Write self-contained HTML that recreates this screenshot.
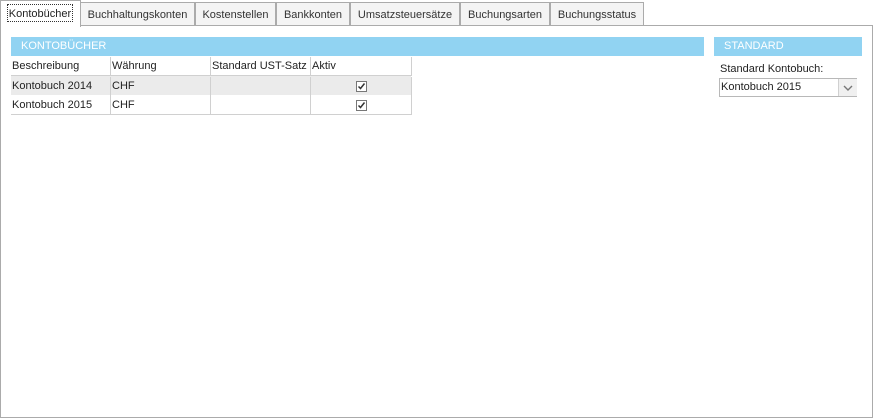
<!DOCTYPE html>
<html><head><style>
body{margin:0;width:873px;height:418px;background:#fff;font-family:"Liberation Sans",sans-serif;font-size:11px;color:#222;position:relative;overflow:hidden}
.a{position:absolute}
.tab{position:absolute;top:2px;height:23px;border:1px solid #ababab;border-bottom:none;background:#f4f4f4;line-height:24px;text-align:center;box-sizing:border-box;color:#333}
.hd{position:absolute;background:#91d3f2;color:#fff;height:19px;line-height:19px;padding-left:10px;box-sizing:border-box}
.c{position:absolute;height:19px;line-height:19px;padding-left:1px;box-sizing:border-box;border-right:1px solid #d0d0d0}
.chk{position:absolute;width:11px;height:11px;border:1px solid #777;box-sizing:border-box;background:#fff}
</style></head><body>
<div class="a" style="left:0;top:25px;width:873px;height:393px;border:1px solid #ababab;box-sizing:border-box"></div>
<div class="a" style="left:0;top:0;width:81px;height:27px;border:1px solid #ababab;border-bottom:none;background:#fff;box-sizing:border-box"></div>
<div class="a" style="left:7px;top:4px;width:66px;height:18px;border:1px dotted #333;line-height:18px;text-align:center;box-sizing:border-box">Kontobücher</div>
<div class="tab" style="left:80px;width:115px">Buchhaltungskonten</div>
<div class="tab" style="left:195px;width:81px">Kostenstellen</div>
<div class="tab" style="left:276px;width:74px">Bankkonten</div>
<div class="tab" style="left:350px;width:110px">Umsatzsteuersätze</div>
<div class="tab" style="left:460px;width:90px">Buchungsarten</div>
<div class="tab" style="left:550px;width:94px">Buchungsstatus</div>
<div class="hd" style="left:11px;top:37px;width:693px">KONTOBÜCHER</div>
<div class="hd" style="left:714px;top:37px;width:148px">STANDARD</div>
<div class="a" style="left:11px;top:76px;width:400px;height:19px;background:#ebebeb"></div>
<div class="a" style="left:11px;top:57px;width:400px;height:58px;border-bottom:1px solid #d0d0d0;box-sizing:border-box"></div>
<div class="c" style="left:11px;top:57px;width:100px">Beschreibung</div>
<div class="c" style="left:111px;top:57px;width:100px">Währung</div>
<div class="c" style="left:211px;top:57px;width:100px">Standard UST-Satz</div>
<div class="c" style="left:311px;top:57px;width:101px">Aktiv</div>
<div class="a" style="left:11px;top:75px;width:400px;border-top:1px solid #d0d0d0"></div>
<div class="c" style="left:11px;top:77px;width:100px">Kontobuch 2014</div>
<div class="c" style="left:111px;top:77px;width:100px">CHF</div>
<div class="c" style="left:211px;top:77px;width:100px"></div>
<div class="c" style="left:311px;top:77px;width:101px"></div>
<div class="c" style="left:11px;top:96px;width:100px">Kontobuch 2015</div>
<div class="c" style="left:111px;top:96px;width:100px">CHF</div>
<div class="c" style="left:211px;top:96px;width:100px"></div>
<div class="c" style="left:311px;top:96px;width:101px"></div>
<div class="chk" style="left:356px;top:81px"><svg width="9" height="9" style="position:absolute;left:0;top:0"><path d="M1.5 4.5L3.5 6.5L7.5 1.5" stroke="#333" stroke-width="1.5" fill="none"/></svg></div>
<div class="chk" style="left:356px;top:100px"><svg width="9" height="9" style="position:absolute;left:0;top:0"><path d="M1.5 4.5L3.5 6.5L7.5 1.5" stroke="#333" stroke-width="1.5" fill="none"/></svg></div>
<div class="a" style="left:720px;top:63px;color:#222">Standard Kontobuch:</div>
<div class="a" style="left:719px;top:78px;width:138px;height:19px;border:1px solid #b8b8b8;box-sizing:border-box;line-height:17px;padding-left:1px">Kontobuch 2015</div>
<div class="a" style="left:838px;top:79px;width:18px;height:17px;background:#f0f0f0;border-left:1px solid #d0d0d0"><svg width="18" height="17"><path d="M5 7l4 4 4-4" stroke="#777" stroke-width="1.4" fill="none"/></svg></div>
</body></html>
